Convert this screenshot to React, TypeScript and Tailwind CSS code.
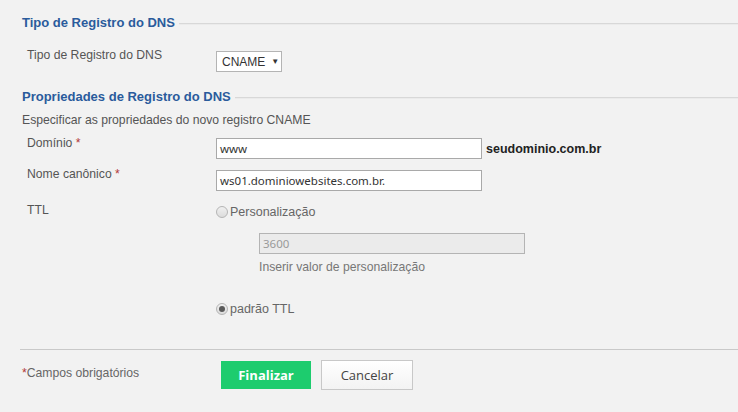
import React from 'react';

const SectionTitle: React.FC<{ children: React.ReactNode; className?: string }> = ({ children, className = '' }) => (
  <div className={`flex items-center gap-[4px] h-[16px] ${className}`}>
    <h2 className="text-[13px] font-bold text-[#2a5b9c] leading-[16px] whitespace-nowrap">{children}</h2>
    <div className="flex-1 h-0 border-t border-[#d8d8d8] border-b-[#ebebeb] border-b mt-[1px]" />
  </div>
);

const Radio: React.FC<{ checked?: boolean }> = ({ checked }) => (
  <span className="inline-flex items-center justify-center w-[12px] h-[12px] rounded-full border border-[#b5b5b5] bg-gradient-to-b from-[#f0f0f0] to-[#dcdcdc] shrink-0">
    {checked && <span className="w-[6px] h-[6px] rounded-full bg-[#5a5a5a]" />}
  </span>
);

const Required = () => <span className="text-[#b23a3a]"> *</span>;

const inputCls =
  "h-[21px] w-[266px] border border-[#a9a9a9] bg-white px-[3px] text-[11.5px] text-[#333] font-['Noto_Sans',Tahoma,sans-serif] leading-[19px]";

export default function App() {
  return (
    <div className="min-h-[412px] bg-[#f2f2f2] pl-[22px] pt-[15px] font-['Liberation_Sans',Arial,sans-serif] text-[12.2px] text-[#555] leading-[16px]">
      <SectionTitle>Tipo de Registro do DNS</SectionTitle>

      <div className="mt-[16px] flex items-start pl-[5px]">
        <div className="w-[189px]">Tipo de Registro do DNS</div>
        <div className="mt-[4px] h-[21px] w-[66px] border border-[#b4b4b4] bg-white flex items-center pl-[5px] text-[#333] text-[12px]">
          CNAME <span className="ml-[6px] text-[8px]">▼</span>
        </div>
      </div>

      <SectionTitle className="mt-[17px]">Propriedades de Registro do DNS</SectionTitle>

      <div className="mt-[7px]">Especificar as propriedades do novo registro CNAME</div>

      <div className="mt-[7px] flex items-start pl-[5px]">
        <div className="w-[189px]">
          Domínio<Required />
        </div>
        <div className="mt-[3px] flex items-center">
          <div className={inputCls}>www</div>
          <span className="ml-[4px] text-[12.5px] font-bold text-[#222]">seudominio.com.br</span>
        </div>
      </div>

      <div className="mt-[7px] flex items-start pl-[5px]">
        <div className="w-[189px]">
          Nome canônico<Required />
        </div>
        <div className={`mt-[4px] ${inputCls}`}>ws01.dominiowebsites.com.br.</div>
      </div>

      <div className="mt-[11px] flex items-start pl-[5px]">
        <div className="w-[189px]">TTL</div>
        <div className="mt-[2px] flex flex-col">
          <label className="flex items-center gap-[2px] text-[12.5px] text-[#666]">
            <Radio /> Personalização
          </label>
          <div className="ml-[43px] mt-[13px] h-[21px] w-[266px] border border-[#b4b4b4] bg-[#ebebeb] px-[3px] text-[11.5px] text-[#9a9a9a] font-['Noto_Sans',Tahoma,sans-serif] leading-[19px]">
            3600
          </div>
          <div className="ml-[43px] mt-[5px] text-[#777]">Inserir valor de personalização</div>
          <label className="mt-[26px] flex items-center gap-[2px] text-[12.5px] text-[#666]">
            <Radio checked /> padrão TTL
          </label>
        </div>
      </div>

      <div className="mt-[32px] -ml-[2px] border-t border-[#c9c9c9]" />

      <div className="mt-[10px] flex items-start">
        <div className="w-[199px] pt-[5px] text-[#666]">
          <span className="text-[#b23a3a]">*</span>Campos obrigatórios
        </div>
        <button className="mt-[1px] h-[28px] w-[90px] bg-[#1dcc6e] text-white text-[13px] font-bold font-['Open_Sans',sans-serif]">
          Finalizar
        </button>
        <button className="ml-[10px] h-[30px] w-[92px] border border-[#c8c8c8] bg-gradient-to-b from-white to-[#f3f3f3] text-[#444] text-[13px] font-['Open_Sans',sans-serif]">
          Cancelar
        </button>
      </div>
    </div>
  );
}
